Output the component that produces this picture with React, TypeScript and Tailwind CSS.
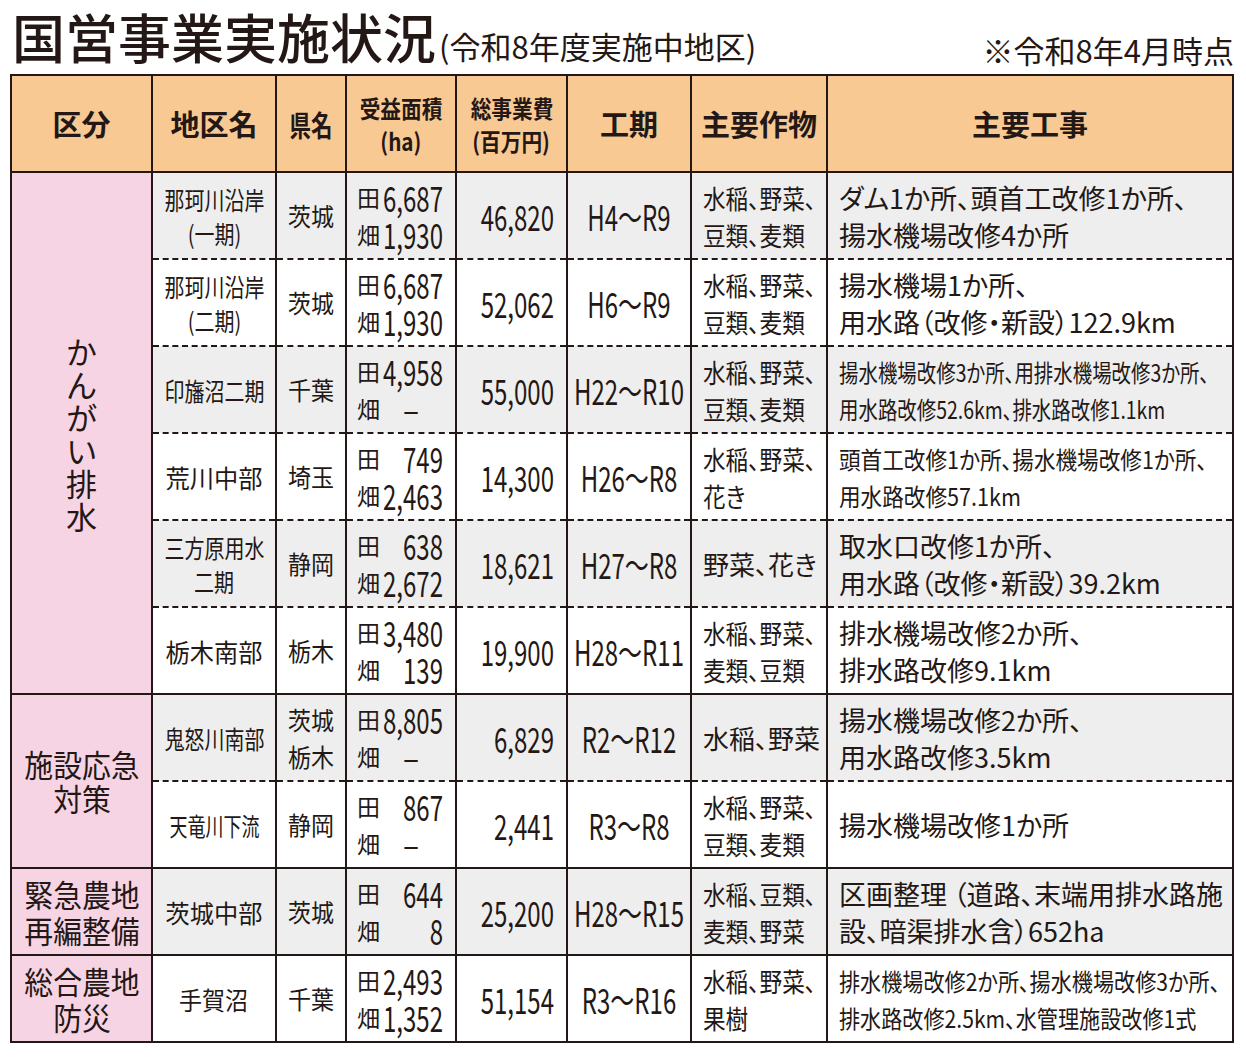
import React from "react";

type Row = {
  name: string[];
  nameCls: string;
  pref: string[];
  prefCls: string;
  ta: string;
  hata: string;
  cost: string;
  term: string;
  crops: string[];
  cropsCls: string;
  work: string[];
  workCls: string;
  gray: boolean;
  dashed: boolean;
};

const rows: Row[] = [
  {
    name: ["那珂川沿岸", "(一期)"],
    nameCls: "scale-x-[0.8]",
    pref: ["茨城"],
    prefCls: "scale-x-[0.92]",
    ta: "6,687",
    hata: "1,930",
    cost: "46,820",
    term: "H4～R9",
    crops: ["水稲、野菜、", "豆類、麦類"],
    cropsCls: "scale-x-[0.87]",
    work: ["ダム1か所、頭首工改修1か所、", "揚水機場改修4か所"],
    workCls: "text-[27px]",
    gray: true,
    dashed: true,
  },
  {
    name: ["那珂川沿岸", "(二期)"],
    nameCls: "scale-x-[0.8]",
    pref: ["茨城"],
    prefCls: "scale-x-[0.92]",
    ta: "6,687",
    hata: "1,930",
    cost: "52,062",
    term: "H6～R9",
    crops: ["水稲、野菜、", "豆類、麦類"],
    cropsCls: "scale-x-[0.87]",
    work: ["揚水機場1か所、", "用水路（改修・新設）122.9km"],
    workCls: "text-[27px]",
    gray: false,
    dashed: true,
  },
  {
    name: ["印旛沼二期"],
    nameCls: "scale-x-[0.8]",
    pref: ["千葉"],
    prefCls: "scale-x-[0.92]",
    ta: "4,958",
    hata: "–",
    cost: "55,000",
    term: "H22～R10",
    crops: ["水稲、野菜、", "豆類、麦類"],
    cropsCls: "scale-x-[0.87]",
    work: ["揚水機場改修3か所、用排水機場改修3か所、", "用水路改修52.6km、排水路改修1.1km"],
    workCls: "text-[24px] scale-x-[0.81]",
    gray: true,
    dashed: true,
  },
  {
    name: ["荒川中部"],
    nameCls: "scale-x-[0.97]",
    pref: ["埼玉"],
    prefCls: "scale-x-[0.92]",
    ta: "749",
    hata: "2,463",
    cost: "14,300",
    term: "H26～R8",
    crops: ["水稲、野菜、", "花き"],
    cropsCls: "scale-x-[0.87]",
    work: ["頭首工改修1か所、揚水機場改修1か所、", "用水路改修57.1km"],
    workCls: "text-[24px] scale-x-[0.9]",
    gray: false,
    dashed: true,
  },
  {
    name: ["三方原用水", "二期"],
    nameCls: "scale-x-[0.8]",
    pref: ["静岡"],
    prefCls: "scale-x-[0.92]",
    ta: "638",
    hata: "2,672",
    cost: "18,621",
    term: "H27～R8",
    crops: ["野菜、花き"],
    cropsCls: "scale-x-[1]",
    work: ["取水口改修1か所、", "用水路（改修・新設）39.2km"],
    workCls: "text-[27px]",
    gray: true,
    dashed: true,
  },
  {
    name: ["栃木南部"],
    nameCls: "scale-x-[0.97]",
    pref: ["栃木"],
    prefCls: "scale-x-[0.92]",
    ta: "3,480",
    hata: "139",
    cost: "19,900",
    term: "H28～R11",
    crops: ["水稲、野菜、", "麦類、豆類"],
    cropsCls: "scale-x-[0.87]",
    work: ["排水機場改修2か所、", "排水路改修9.1km"],
    workCls: "text-[27px]",
    gray: false,
    dashed: false,
  },
  {
    name: ["鬼怒川南部"],
    nameCls: "scale-x-[0.8]",
    pref: ["茨城", "栃木"],
    prefCls: "scale-x-[0.92]",
    ta: "8,805",
    hata: "–",
    cost: "6,829",
    term: "R2～R12",
    crops: ["水稲、野菜"],
    cropsCls: "scale-x-[1]",
    work: ["揚水機場改修2か所、", "用水路改修3.5km"],
    workCls: "text-[27px]",
    gray: true,
    dashed: true,
  },
  {
    name: ["天竜川下流"],
    nameCls: "scale-x-[0.72]",
    pref: ["静岡"],
    prefCls: "scale-x-[0.92]",
    ta: "867",
    hata: "–",
    cost: "2,441",
    term: "R3～R8",
    crops: ["水稲、野菜、", "豆類、麦類"],
    cropsCls: "scale-x-[0.87]",
    work: ["揚水機場改修1か所"],
    workCls: "text-[27px]",
    gray: false,
    dashed: false,
  },
  {
    name: ["茨城中部"],
    nameCls: "scale-x-[0.97]",
    pref: ["茨城"],
    prefCls: "scale-x-[0.92]",
    ta: "644",
    hata: "8",
    cost: "25,200",
    term: "H28～R15",
    crops: ["水稲、豆類、", "麦類、野菜"],
    cropsCls: "scale-x-[0.87]",
    work: ["区画整理 （道路、末端用排水路施", "設、暗渠排水含）652ha"],
    workCls: "text-[27px]",
    gray: true,
    dashed: false,
  },
  {
    name: ["手賀沼"],
    nameCls: "scale-x-[0.92]",
    pref: ["千葉"],
    prefCls: "scale-x-[0.92]",
    ta: "2,493",
    hata: "1,352",
    cost: "51,154",
    term: "R3～R16",
    crops: ["水稲、野菜、", "果樹"],
    cropsCls: "scale-x-[0.87]",
    work: ["排水機場改修2か所、揚水機場改修3か所、", "排水路改修2.5km、水管理施設改修1式"],
    workCls: "text-[24px] scale-x-[0.88]",
    gray: false,
    dashed: false,
  },
];

function Stack({ lines, cls, leading }: { lines: string[]; cls: string; leading: string }) {
  return (
    <div className={"flex flex-col items-center " + leading}>
      {lines.map((l) => (
        <div key={l} className={"origin-center whitespace-nowrap " + cls}>
          {l}
        </div>
      ))}
    </div>
  );
}

// tall narrow digits: small size stretched vertically
function Num({ v }: { v: string }) {
  return (
    <div className="flex w-[62px] justify-end">
      {v === "–" ? (
        <span className="w-full pr-[2px] text-center text-[30px] leading-[30px]">–</span>
      ) : (
        <span className="origin-center scale-y-[1.46] whitespace-nowrap text-[24px] leading-[22px]">{v}</span>
      )}
    </div>
  );
}

function Vertical({ text }: { text: string }) {
  return (
    <div className="flex flex-col items-center text-[31px]">
      {text.split("").map((c, i) => (
        <span key={i} className="h-[33px] leading-[33px]">
          {c}
        </span>
      ))}
    </div>
  );
}

const groups: Record<number, { span: number; node: React.ReactNode }> = {
  0: { span: 6, node: <Vertical text="かんがい排水" /> },
  6: { span: 2, node: <Stack lines={["施設応急", "対策"]} cls="text-[31px] scale-x-[0.93]" leading="leading-[34px]" /> },
  8: { span: 1, node: <Stack lines={["緊急農地", "再編整備"]} cls="text-[31px] scale-x-[0.93]" leading="leading-[36px]" /> },
  9: { span: 1, node: <Stack lines={["総合農地", "防災"]} cls="text-[31px] scale-x-[0.93]" leading="leading-[36px]" /> },
};

export default function App() {
  return (
    <div className="min-h-screen bg-white font-['Noto_Sans_CJK_JP',sans-serif] text-[#231815] [font-feature-settings:'palt']">
      <div className="flex h-[74px] items-end justify-between pl-[12px] pr-[12px]">
        <div className="flex items-end pb-[8px]">
          <span className="text-[53px] leading-[60px] font-medium">国営事業実施状況</span>
          <span className="ml-[3px] text-[31px] leading-[40px]">(令和8年度実施中地区)</span>
        </div>
        <span className="pb-[4px] text-[31px] leading-[40px]">※令和8年4月時点</span>
      </div>

      <table className="ml-[10px] w-[1224px] table-fixed border-collapse border-2 border-[#231815]">
        <colgroup>
          <col className="w-[141px]" />
          <col className="w-[124px]" />
          <col className="w-[70px]" />
          <col className="w-[110px]" />
          <col className="w-[111px]" />
          <col className="w-[124px]" />
          <col className="w-[136px]" />
          <col />
        </colgroup>
        <thead>
          <tr className="h-[97px] bg-[#f9c994] font-bold">
            <th className="border-b-2 border-[#231815] p-0 text-[29px]">区分</th>
            <th className="border-l-2 border-b-2 border-[#231815] p-0 text-[29px]">地区名</th>
            <th className="border-l-2 border-b-2 border-[#231815] p-0">
              <Stack lines={["県名"]} cls="text-[29px] scale-x-[0.74]" leading="leading-[40px]" />
            </th>
            <th className="border-l-2 border-b-2 border-[#231815] p-0">
              <Stack lines={["受益面積", "(ha)"]} cls="text-[24px] scale-x-[0.86]" leading="leading-[33px]" />
            </th>
            <th className="border-l-2 border-b-2 border-[#231815] p-0">
              <Stack lines={["総事業費", "(百万円)"]} cls="text-[24px] scale-x-[0.86]" leading="leading-[33px]" />
            </th>
            <th className="border-l-2 border-b-2 border-[#231815] p-0 text-[29px]">工期</th>
            <th className="border-l-2 border-b-2 border-[#231815] p-0 text-[29px]">主要作物</th>
            <th className="border-l-2 border-b-2 border-[#231815] p-0 text-[29px]">主要工事</th>
          </tr>
        </thead>
        <tbody>
          {rows.map((r, i) => {
            const bottom = r.dashed
              ? "[border-bottom:2px_dashed_#231815]"
              : "border-b-2 border-[#231815]";
            const bg = r.gray ? "bg-[#eeeeee]" : "bg-white";
            const cell = "border-l-2 border-[#231815] p-0 align-middle " + bottom + " " + bg;
            const g = groups[i];
            return (
              <tr key={i} className="h-[87px]">
                {g && (
                  <td rowSpan={g.span} className="border-b-2 border-[#231815] bg-[#f7d4e4] p-0 align-middle">
                    {g.node}
                  </td>
                )}
                <td className={cell}>
                  <Stack lines={r.name} cls={"text-[25px] " + r.nameCls} leading="leading-[34px]" />
                </td>
                <td className={cell}>
                  <Stack lines={r.pref} cls={"text-[25px] " + r.prefCls} leading="leading-[37px]" />
                </td>
                <td className={cell}>
                  <div className="flex flex-col pl-[10px] pr-[12px]">
                    <div className="flex h-[37px] items-center justify-between">
                      <span className="text-[23px] leading-[30px]">田</span>
                      <Num v={r.ta} />
                    </div>
                    <div className="flex h-[37px] items-center justify-between">
                      <span className="text-[23px] leading-[30px]">畑</span>
                      <Num v={r.hata} />
                    </div>
                  </div>
                </td>
                <td className={cell}>
                  <div className="flex justify-end pr-[12px]">
                    <span className="origin-center scale-y-[1.46] whitespace-nowrap text-[24px] leading-[22px]">{r.cost}</span>
                  </div>
                </td>
                <td className={cell}>
                  <div className="flex justify-center">
                    <span className="origin-center scale-y-[1.46] whitespace-nowrap text-[24px] leading-[22px]">{r.term}</span>
                  </div>
                </td>
                <td className={cell}>
                  <div className="flex flex-col pl-[11px] text-[26px] leading-[37px]">
                    {r.crops.map((l) => (
                      <div key={l} className={"origin-left whitespace-nowrap " + r.cropsCls}>
                        {l}
                      </div>
                    ))}
                  </div>
                </td>
                <td className={cell}>
                  <div className="flex flex-col pl-[11px] leading-[37px]">
                    {r.work.map((l) => (
                      <div key={l} className={"origin-left whitespace-nowrap " + r.workCls}>
                        {l}
                      </div>
                    ))}
                  </div>
                </td>
              </tr>
            );
          })}
        </tbody>
      </table>
    </div>
  );
}
